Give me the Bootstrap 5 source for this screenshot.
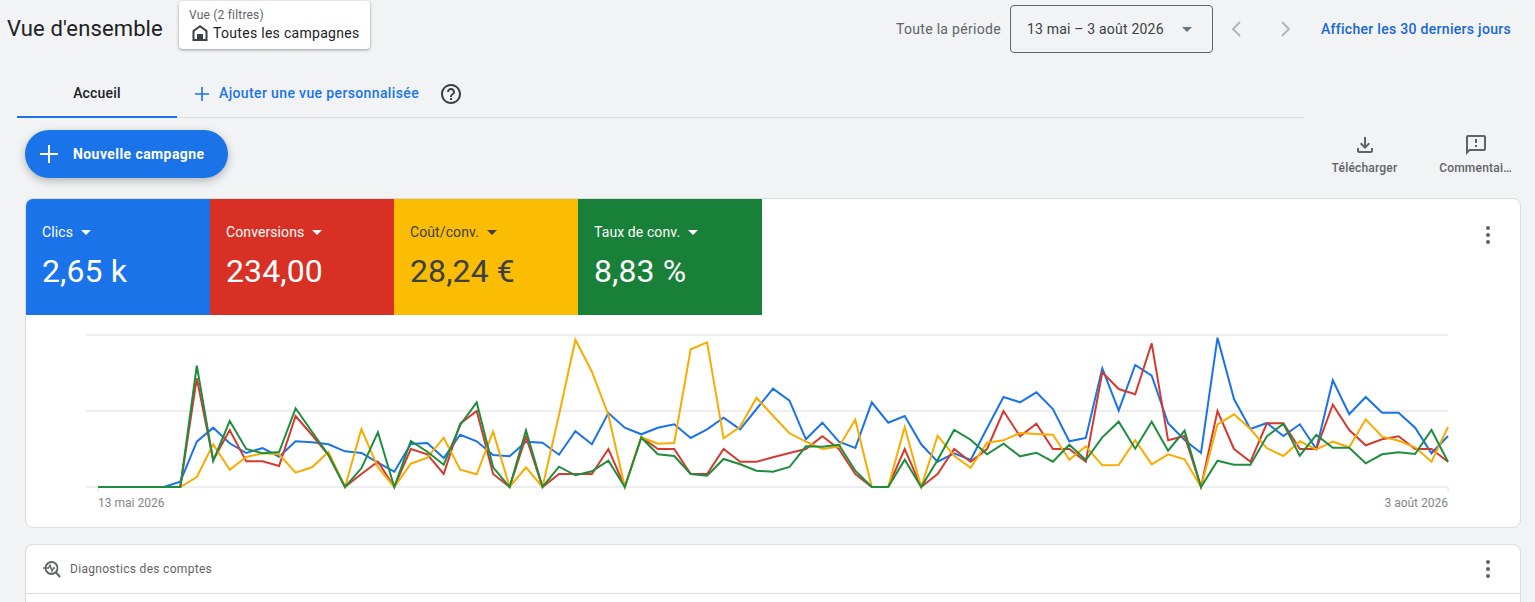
<!DOCTYPE html>
<html lang="fr">
<head>
  <meta charset="UTF-8">
  <meta name="viewport" content="width=device-width, initial-scale=1">
  <title>Vue d'ensemble</title>
  <link href="https://cdn.jsdelivr.net/npm/bootstrap@5.3.0/dist/css/bootstrap.min.css" rel="stylesheet">
  <style>
    html, body { height: 100%; overflow: hidden; }
    body { background: #f1f3f4; font-family: Roboto, "Liberation Sans", sans-serif; color: #202124; font-size: 14px; }
    .top-bar { height: 58px; padding-left: 7px; padding-right: 24px; }
    .page-title { font-size: 22px; font-weight: 400; margin: 0 16px 0 0; line-height: 58px; width: 156px; white-space: nowrap; letter-spacing: .13px; }
    .filter-box { width: 191px; height: 48px; margin-top: 1px; background: #fff; border-radius: 4px; box-shadow: 0 1px 3px rgba(60,64,67,.5); padding: 7px 0 7px 10px; }
    .filter-label { font-size: 12px; line-height: 14px; color: #5f6368; letter-spacing: .2px; }
    .filter-value { font-size: 14px; line-height: 20px; margin-top: 1px; letter-spacing: .3px; gap: 4px; padding-left: 2px; white-space: nowrap; }
    .filter-value svg { flex-shrink: 0; }
    .period-label { color: #5f6368; margin-right: 9px; letter-spacing: .3px; line-height: 58px; }
    .date-box { width: 203px; height: 48px; margin-top: 5px; border: 1px solid #5f6368; border-radius: 4px; padding: 0 20px 0 16px; letter-spacing: .2px; color: #3c4043; }
    .caret-down { width: 0; height: 0; border-left: 5px solid transparent; border-right: 5px solid transparent; border-top: 5px solid currentColor; }
    .pager { width: 48px; margin-top: 20px; }
    .link-blue { color: #1a67d2; font-weight: 500; letter-spacing: .3px; margin-left: 12px; line-height: 58px; }
    .tab-row { margin-left: 17px; width: 1288px; height: 60px; border-bottom: 1px solid #dadce0; }
    .tab-home { width: 160px; height: 60px; padding-top: 12px; border-bottom: 2px solid #1a73e8; margin-bottom: -1px; font-weight: 500; color: #202124; letter-spacing: .2px; }
    .tab-add { color: #1a73e8; font-weight: 500; margin-left: 17px; padding-top: 12px; letter-spacing: .37px; }
    .tab-help { margin-left: 20px; margin-top: 12px; }
    .action-row { height: 80px; padding: 12px 0 0 25px; }
    .btn-new { height: 48px; width: 203px; border-radius: 24px; background: #1a73e8; color: #fff; font-weight: 700; font-size: 14px; border: 0; padding: 0 0 0 15px; box-shadow: 0 3px 8px rgba(60,64,67,.35); letter-spacing: .42px; }
    .btn-new:hover { background: #1a73e8; color: #fff; }
    .tool-btn { width: 111px; color: #5f6368; font-size: 12px; font-weight: 500; line-height: 16px; margin-top: 3px; letter-spacing: .2px; gap: 3px; }
    .main-card { margin: 0 14px 0 25px; height: 330px; background: #fff; border: 1px solid #dadce0; border-radius: 8px; overflow: hidden; }
    .tile { width: 184px; height: 116px; padding: 24px 16px 0; }
    .tile-label { font-size: 14px; line-height: 18px; font-weight: 400; letter-spacing: .1px; }
    .tile-value { font-size: 32px; line-height: 40px; margin-top: 10px; letter-spacing: .1px; }
    .tile-blue { background: #1a73e8; color: #fff; }
    .tile-red { background: #d93025; color: #fff; }
    .tile-yellow { background: #fbbc04; color: #3c4043; }
    .tile-green { background: #188038; color: #fff; }
    .chart-svg { display: block; }
    .axis-text { font: 12px Roboto, sans-serif; fill: #80868b; }
    .diag-card { margin: 16px 14px 0 25px; background: #fff; border: 1px solid #dadce0; border-bottom: 0; border-radius: 8px 8px 0 0; height: 58px; }
    .diag-head { height: 49px; padding: 0 22px 0 16px; border-bottom: 1px solid #dadce0; font-size: 12px; color: #5f6368; letter-spacing: .3px; }
    .dots-btn { margin-right: 22px; margin-top: 24px; }
  </style>
</head>
<body>

<div class="top-bar d-flex align-items-start">
  <h1 class="page-title">Vue d'ensemble</h1>
  <div class="filter-box">
    <div class="filter-label">Vue (2 filtres)</div>
    <div class="filter-value d-flex align-items-center">
      <svg width="18" height="18" viewBox="0 0 18 18" fill="none"><path d="M9 2.200 2.500 7V16h13V7z" stroke="#3c4043" stroke-width="2"/><path d="M6 10h6v6H6z" fill="#3c4043"/></svg>
      <span>Toutes les campagnes</span>
    </div>
  </div>
  <div class="ms-auto d-flex align-items-start">
    <span class="period-label">Toute la période</span>
    <div class="date-box d-flex align-items-center justify-content-between">
      <span>13 mai – 3 août 2026</span>
      <span class="caret-down text-secondary"></span>
    </div>
    <div class="pager d-flex justify-content-center">
      <svg width="18" height="18" viewBox="0 0 18 18" fill="none"><path d="M12 2 5 9l7 7" stroke="#b0b3b8" stroke-width="1.800"/></svg>
    </div>
    <div class="pager d-flex justify-content-center">
      <svg width="18" height="18" viewBox="0 0 18 18" fill="none"><path d="m6 2 7 7-7 7" stroke="#b0b3b8" stroke-width="1.800"/></svg>
    </div>
    <a href="#" class="link-blue text-decoration-none">Afficher les 30 derniers jours</a>
  </div>
</div>

<div class="tab-row d-flex align-items-center">
  <div class="tab-home d-flex align-items-center justify-content-center">Accueil</div>
  <div class="tab-add d-flex align-items-center gap-2">
    <svg width="16" height="16" viewBox="0 0 16 16"><path d="M7.200 1h1.600v6.200H15v1.600H8.800V15H7.200V8.800H1V7.200h6.200z" fill="#1a73e8"/></svg>
    <span style="margin-left:1px">Ajouter une vue personnalisée</span>
  </div>
  <svg class="tab-help" width="24" height="24" viewBox="0 0 24 24"><path fill="#3c4043" d="M11 18h2v-2h-2v2zm1-16C6.480 2 2 6.480 2 12s4.480 10 10 10 10-4.480 10-10S17.520 2 12 2zm0 18c-4.410 0-8-3.590-8-8s3.590-8 8-8 8 3.590 8 8-3.590 8-8 8zm0-14c-2.210 0-4 1.790-4 4h2c0-1.100.9-2 2-2s2 .9 2 2c0 2-3 1.750-3 5h2c0-2.250 3-2.500 3-5 0-2.210-1.790-4-4-4z"/></svg>
</div>

<div class="action-row d-flex align-items-start justify-content-between">
  <button class="btn btn-new d-flex align-items-center">
    <svg width="18" height="18" viewBox="0 0 18 18"><path d="M8 0h2v8h8v2h-8v8H8v-8H0V8h8z" fill="#fff"/></svg>
    <span style="margin-left:15px">Nouvelle campagne</span>
  </button>
  <div class="d-flex" style="margin-right:4px">
    <div class="tool-btn d-flex flex-column align-items-center">
      <svg width="24" height="24" viewBox="0 0 24 24"><path fill="#5f6368" d="M18 15v3H6v-3H4v3c0 1.100.9 2 2 2h12c1.100 0 2-.9 2-2v-3h-2zm-1-4-1.410-1.410L13 12.170V4h-2v8.170L8.410 9.590 7 11l5 5 5-5z"/></svg>
      <span>Télécharger</span>
    </div>
    <div class="tool-btn d-flex flex-column align-items-center">
      <svg width="24" height="24" viewBox="0 0 24 24"><path fill="#5f6368" d="M20 2H4c-1.100 0-1.990.9-1.990 2L2 22l4-4h14c1.100 0 2-.9 2-2V4c0-1.100-.9-2-2-2zm0 14H5.170L4 17.170V4h16v12zM11 12h2v2h-2zm0-6h2v4h-2z"/></svg>
      <span>Commentai…</span>
    </div>
  </div>
</div>

<div class="main-card">
  <div class="d-flex justify-content-between">
    <div class="d-flex">
      <div class="tile tile-blue">
        <div class="tile-label d-flex align-items-center gap-2">Clics <span class="caret-down"></span></div>
        <div class="tile-value">2,65 k</div>
      </div>
      <div class="tile tile-red">
        <div class="tile-label d-flex align-items-center gap-2">Conversions <span class="caret-down"></span></div>
        <div class="tile-value">234,00</div>
      </div>
      <div class="tile tile-yellow">
        <div class="tile-label d-flex align-items-center gap-2">Coût/conv. <span class="caret-down"></span></div>
        <div class="tile-value">28,24 €</div>
      </div>
      <div class="tile tile-green">
        <div class="tile-label d-flex align-items-center gap-2">Taux de conv. <span class="caret-down"></span></div>
        <div class="tile-value">8,83 %</div>
      </div>
    </div>
    <svg class="dots-btn" width="20" height="24" viewBox="0 0 20 24"><g fill="#5f6368"><circle cx="10" cy="5" r="2"/><circle cx="10" cy="12" r="2"/><circle cx="10" cy="19" r="2"/></g></svg>
  </div>
  <svg class="chart-svg" id="chart" width="1494" height="212" viewBox="0 0 1494 212"></svg>
</div>

<div class="diag-card">
  <div class="diag-head d-flex align-items-center">
    <svg width="20" height="20" viewBox="0 0 20 20" fill="none" stroke="#5f6368" stroke-width="1.800" class="me-2"><circle cx="9.500" cy="9" r="6"/><path d="m14 13.500 4 4.500" stroke-width="2"/><path d="M1 9h5.500l1.500-3 2 6 1.500-3H13" stroke-width="1.400"/></svg>
    <span>Diagnostics des comptes</span>
    <svg class="ms-auto" width="20" height="24" viewBox="0 0 20 24"><g fill="#5f6368"><circle cx="10" cy="5" r="2"/><circle cx="10" cy="12" r="2"/><circle cx="10" cy="19" r="2"/></g></svg>
  </div>
</div>

<script>
  // y values read off the chart at 3x, one per day from 13 mai
  const series = [
    { color: '#1a73e8', y: [486,486,486,486,486,470,350,308,355,384,369,395,349,352,358,379,384,413,440,357,354,399,329,349,390,394,350,353,389,319,358,264,308,328,308,298,339,313,278,313,252,191,227,343,293,350,369,232,293,273,358,410,385,405,310,216,232,202,252,349,339,130,257,120,152,295,345,384,38,222,312,294,333,298,372,166,268,216,263,263,308,385,333] },
    { color: '#d33b30', y: [486,486,486,486,486,486,160,405,315,409,409,423,273,330,390,486,447,410,486,372,388,447,296,258,447,486,335,486,447,447,447,372,486,336,372,372,447,447,372,410,410,397,384,372,334,372,447,486,486,372,486,447,372,410,372,258,334,296,372,372,410,142,192,208,55,346,333,486,258,372,410,295,295,372,372,239,315,361,343,334,372,372,410] },
    { color: '#f9ab00', y: [486,486,486,486,486,486,456,358,434,396,385,388,443,427,381,486,312,427,486,416,398,338,434,448,320,486,427,486,270,44,140,270,486,336,356,354,73,52,340,305,218,272,325,350,372,365,284,486,486,306,486,332,392,428,353,346,324,327,329,404,364,421,420,346,418,388,403,486,298,268,312,370,393,349,373,350,367,283,335,347,367,410,306] },
    { color: '#1e8e3e', y: [486,486,486,486,486,486,122,408,288,372,385,381,250,320,390,486,430,322,486,348,380,419,300,232,427,486,316,486,425,451,439,407,486,338,388,393,447,452,402,418,437,440,426,364,365,359,437,486,486,404,486,405,315,344,388,356,394,383,410,359,405,337,290,371,290,377,317,486,407,419,419,334,296,392,330,368,368,415,388,382,387,315,410] }
  ];
  const chart = document.getElementById('chart');
  const step = 1350 / 82;
  let html = '';
  [20, 96, 172].forEach(function (y) {
    html += '<line x1="60" x2="1422" y1="' + y + '" y2="' + y + '" stroke="#eeeeee" stroke-width="2"/>';
  });
  html += '<path d="M72 172v5M1422 172v5" stroke="#e0e0e0"/>';
  series.forEach(function (s) {
    const pts = s.y.map(function (v, i) {
      return (72 + step * i).toFixed(1) + ',' + (10 + v / 3).toFixed(1);
    }).join(' ');
    html += '<polyline fill="none" stroke="' + s.color + '" stroke-width="2" points="' + pts + '"/>';
  });
  html += '<text class="axis-text" x="72" y="192">13 mai 2026</text>';
  html += '<text class="axis-text" x="1422" y="192" text-anchor="end">3 août 2026</text>';
  chart.innerHTML = html;
</script>
<script src="https://cdn.jsdelivr.net/npm/bootstrap@5.3.0/dist/js/bootstrap.bundle.min.js"></script>
</body>
</html>
